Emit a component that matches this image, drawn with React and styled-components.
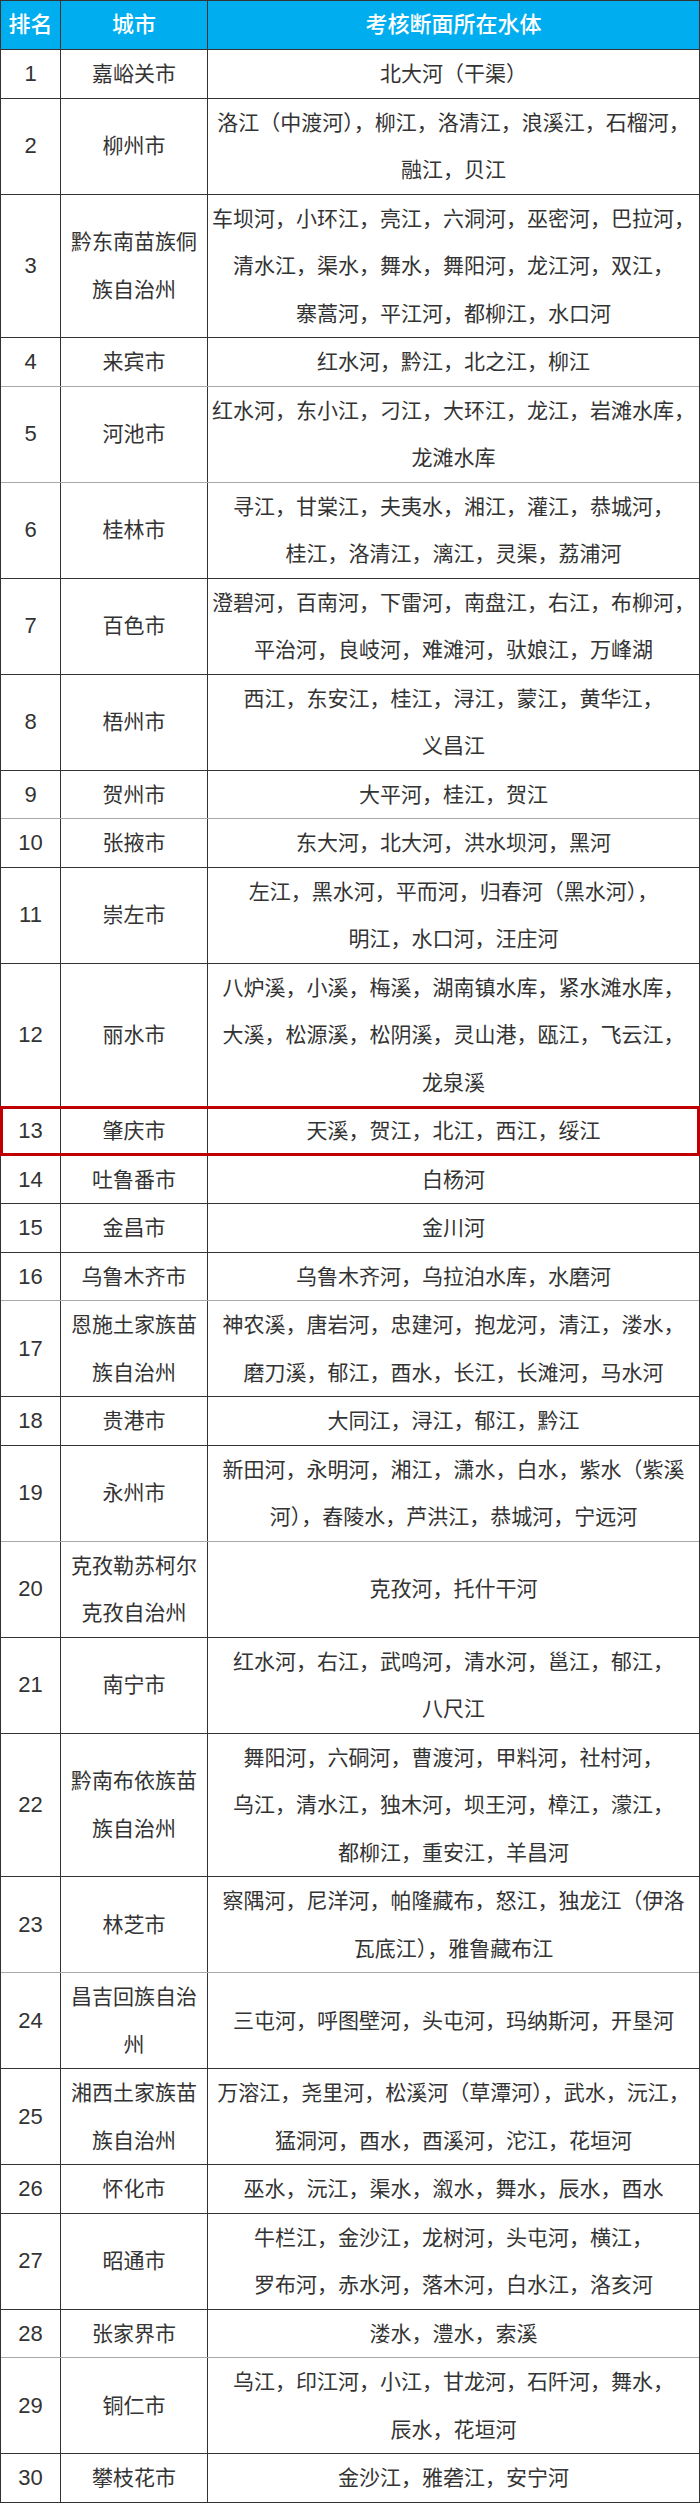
import React from "react";
import styled, { createGlobalStyle, css } from "styled-components";

const GlobalStyle = createGlobalStyle`
  html, body {
    margin: 0;
    padding: 0;
    background: #fff;
  }
  body {
    font-family: "Liberation Sans", "Noto Sans CJK SC", sans-serif;
    color: #333;
  }
`;

const Table = styled.div`
  width: 700px;
  box-sizing: border-box;
  border: 1px solid #333;
  border-bottom: none;
`;

const Row = styled.div`
  display: grid;
  grid-template-columns: 60px 147px 1fr;
  border-bottom: 1px solid ${(p) => (p.$soft ? "#a9a9a9" : "#333")};
  position: relative;

  ${(p) =>
    p.$marked &&
    css`
      &::after {
        content: "";
        position: absolute;
        top: -1px;
        left: -1px;
        right: -1px;
        bottom: -1px;
        border: 3px solid #c00000;
        pointer-events: none;
      }
    `}
`;

const HeaderRow = styled(Row)`
  background: #00aeef;
  border-bottom-color: #333;
`;

const Cell = styled.div`
  display: flex;
  align-items: center;
  justify-content: center;
  text-align: center;
  white-space: nowrap;
  font-size: ${(p) => (p.$num ? "22px" : "21px")};
  line-height: 47.5px;
  border-right: ${(p) => (p.$last ? "none" : "1px solid #333")};
  overflow: visible;
`;

const HeadCell = styled(Cell)`
  color: #fff;
  font-size: 22px;
  font-weight: 500;
  line-height: 48px;
`;

const Lines = ({ items }) =>
  items.map((line, i) => (
    <React.Fragment key={i}>
      {i > 0 && <br />}
      {line}
    </React.Fragment>
  ));

const rows = [
  [1, ["嘉峪关市"], ["北大河（干渠）"]],
  [2, ["柳州市"], ["洛江（中渡河），柳江，洛清江，浪溪江，石榴河，", "融江，贝江"]],
  [
    3,
    ["黔东南苗族侗", "族自治州"],
    [
      "车坝河，小环江，亮江，六洞河，巫密河，巴拉河，",
      "清水江，渠水，舞水，舞阳河，龙江河，双江，",
      "寨蒿河，平江河，都柳江，水口河",
    ],
  ],
  [4, ["来宾市"], ["红水河，黔江，北之江，柳江"], "soft"],
  [5, ["河池市"], ["红水河，东小江，刁江，大环江，龙江，岩滩水库，", "龙滩水库"], "soft"],
  [6, ["桂林市"], ["寻江，甘棠江，夫夷水，湘江，灌江，恭城河，", "桂江，洛清江，漓江，灵渠，荔浦河"]],
  [7, ["百色市"], ["澄碧河，百南河，下雷河，南盘江，右江，布柳河，", "平治河，良岐河，难滩河，驮娘江，万峰湖"]],
  [8, ["梧州市"], ["西江，东安江，桂江，浔江，蒙江，黄华江，", "义昌江"]],
  [9, ["贺州市"], ["大平河，桂江，贺江"], "soft"],
  [10, ["张掖市"], ["东大河，北大河，洪水坝河，黑河"]],
  [11, ["崇左市"], ["左江，黑水河，平而河，归春河（黑水河），", "明江，水口河，汪庄河"]],
  [
    12,
    ["丽水市"],
    [
      "八炉溪，小溪，梅溪，湖南镇水库，紧水滩水库，",
      "大溪，松源溪，松阴溪，灵山港，瓯江，飞云江，",
      "龙泉溪",
    ],
  ],
  [13, ["肇庆市"], ["天溪，贺江，北江，西江，绥江"], "marked"],
  [14, ["吐鲁番市"], ["白杨河"]],
  [15, ["金昌市"], ["金川河"]],
  [16, ["乌鲁木齐市"], ["乌鲁木齐河，乌拉泊水库，水磨河"], "soft"],
  [
    17,
    ["恩施土家族苗", "族自治州"],
    ["神农溪，唐岩河，忠建河，抱龙河，清江，溇水，", "磨刀溪，郁江，酉水，长江，长滩河，马水河"],
  ],
  [18, ["贵港市"], ["大同江，浔江，郁江，黔江"]],
  [19, ["永州市"], ["新田河，永明河，湘江，潇水，白水，紫水（紫溪", "河），舂陵水，芦洪江，恭城河，宁远河"], "soft"],
  [20, ["克孜勒苏柯尔", "克孜自治州"], ["克孜河，托什干河"]],
  [21, ["南宁市"], ["红水河，右江，武鸣河，清水河，邕江，郁江，", "八尺江"]],
  [
    22,
    ["黔南布依族苗", "族自治州"],
    [
      "舞阳河，六硐河，曹渡河，甲料河，社村河，",
      "乌江，清水江，独木河，坝王河，樟江，濛江，",
      "都柳江，重安江，羊昌河",
    ],
  ],
  [23, ["林芝市"], ["察隅河，尼洋河，帕隆藏布，怒江，独龙江（伊洛", "瓦底江），雅鲁藏布江"], "soft"],
  [24, ["昌吉回族自治", "州"], ["三屯河，呼图壁河，头屯河，玛纳斯河，开垦河"]],
  [
    25,
    ["湘西土家族苗", "族自治州"],
    ["万溶江，尧里河，松溪河（草潭河），武水，沅江，", "猛洞河，酉水，酉溪河，沱江，花垣河"],
  ],
  [26, ["怀化市"], ["巫水，沅江，渠水，溆水，舞水，辰水，酉水"]],
  [27, ["昭通市"], ["牛栏江，金沙江，龙树河，头屯河，横江，", "罗布河，赤水河，落木河，白水江，洛亥河"]],
  [28, ["张家界市"], ["溇水，澧水，索溪"], "soft"],
  [29, ["铜仁市"], ["乌江，印江河，小江，甘龙河，石阡河，舞水，", "辰水，花垣河"]],
  [30, ["攀枝花市"], ["金沙江，雅砻江，安宁河"]],
];

export default function App() {
  return (
    <>
      <GlobalStyle />
      <Table>
        <HeaderRow>
          <HeadCell>排名</HeadCell>
          <HeadCell>城市</HeadCell>
          <HeadCell $last>考核断面所在水体</HeadCell>
        </HeaderRow>
        {rows.map(([rank, city, water, mark]) => (
          <Row key={rank} $soft={mark === "soft"} $marked={mark === "marked"}>
            <Cell $num>{rank}</Cell>
            <Cell>
              <div>
                <Lines items={city} />
              </div>
            </Cell>
            <Cell $last>
              <div>
                <Lines items={water} />
              </div>
            </Cell>
          </Row>
        ))}
      </Table>
    </>
  );
}
